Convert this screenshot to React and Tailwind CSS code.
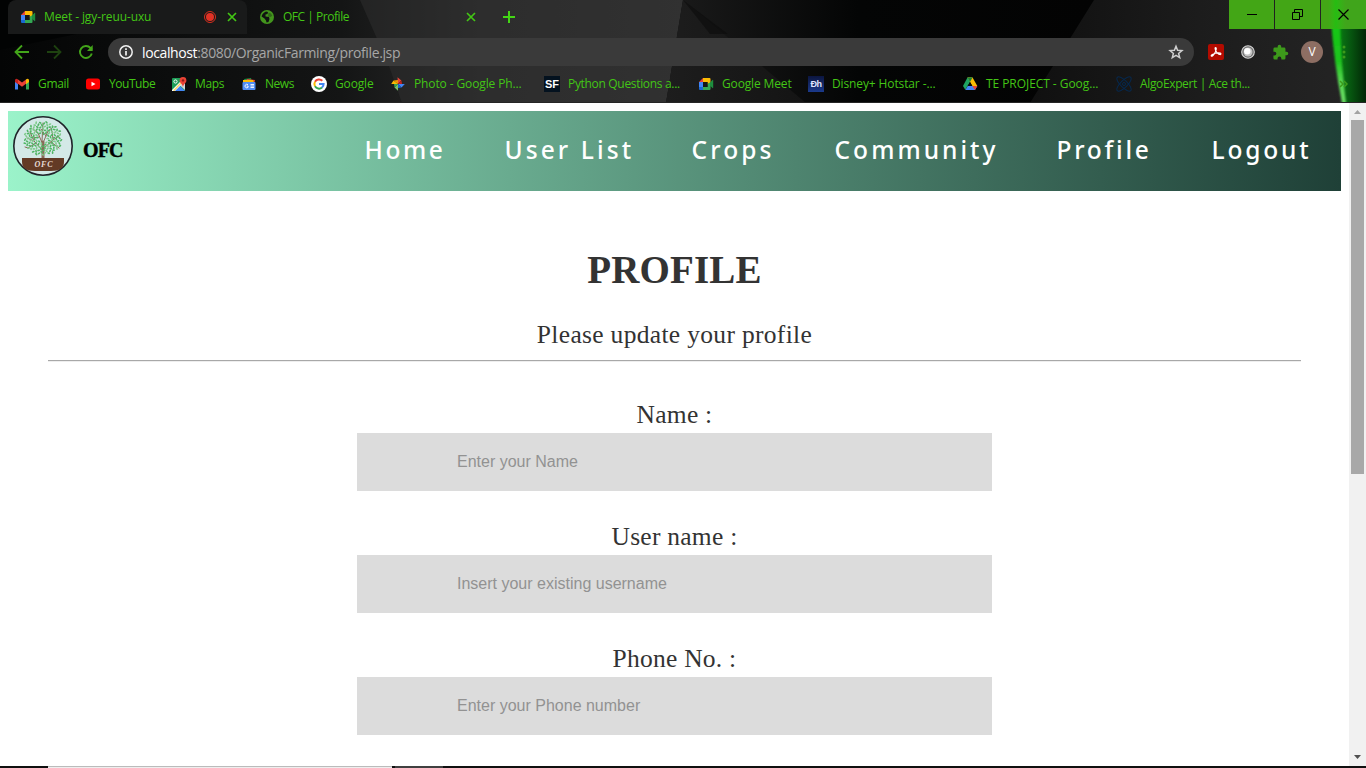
import React from "react";

const MeetIcon = () => (
  <svg viewBox="0 0 16 16" className="size-4 shrink-0">
    <path d="M1 6 5 2v4z" fill="#ea4335" />
    <path d="M5 2h6.500a1 1 0 0 1 1 1v3.500l-3 2V6H5z" fill="#fbbc04" />
    <path d="M1 6h4v5H1z" fill="#4285f4" />
    <path d="M1 11h4v3H2a1 1 0 0 1-1-1z" fill="#1967d2" />
    <path d="M5 11h4.500V8l3-2v7a1 1 0 0 1-1 1H5z" fill="#34a853" />
    <path d="M12 6.500 14.500 4q.7-.4.7.4v7.200q0 .8-.7.4L12 9.700z" fill="#1e8e3e" />
    <path d="M5 6h4.500v5H5z" fill="#151616" />
  </svg>
);

const icons = {
  gmail: (
    <svg viewBox="0 0 16 16" className="size-4 shrink-0">
      <path d="M1 4v9.500h3V6z" fill="#4285f4" />
      <path d="M12 6v7.500h3V4z" fill="#34a853" />
      <path d="M4 3.500v4.200l4 3 4-3V3.500l-4 3z" fill="#ea4335" />
      <path d="M1 4.500V6l3 2.200V3.500L3.200 3Q1 2.400 1 4.500z" fill="#c5221f" />
      <path d="M15 4.500V6l-3 2.200V3.500l.8-.5Q15 2.400 15 4.500z" fill="#fbbc04" />
    </svg>
  ),
  youtube: (
    <svg viewBox="0 0 16 16" className="size-4 shrink-0">
      <rect x="1" y="2.500" width="14" height="11" rx="2.500" fill="#f00" />
      <path d="m6.500 5.700 4 2.300-4 2.300z" fill="#fff" />
    </svg>
  ),
  maps: (
    <svg viewBox="0 0 16 16" className="size-4 shrink-0">
      <rect x="1" y="2" width="13" height="13" rx="1" fill="#1e9e58" />
      <path d="M14 7v7L8.500 9z" fill="#cfd8dc" />
      <path d="m2 15 6-6 6 6z" fill="#4285f4" />
      <path d="m1 14 9-9 2 2-8 8H1z" fill="#fff" />
      <path d="m2 14.500 8-8.500 1 1-7.500 8z" fill="#fdd663" />
      <circle cx="4.500" cy="5.500" r="1.600" fill="none" stroke="#fff" />
      <path d="M12 1a3.400 3.400 0 0 1 3.400 3.400C15.400 7 12.500 7.500 12 11c-.5-3.500-3.400-4-3.400-6.600A3.400 3.400 0 0 1 12 1z" fill="#ea4335" />
      <circle cx="12" cy="4.400" r="1.200" fill="#8c1d18" />
    </svg>
  ),
  news: (
    <svg viewBox="0 0 16 16" className="size-4 shrink-0">
      <path d="m3 3 7-1 1 4H4z" fill="#1e8e3e" />
      <path d="m6 3 8 1-1 4-8-1z" fill="#ea4335" />
      <path d="M2 4h10l1 3H2z" fill="#fbbc04" />
      <rect x="1.500" y="6" width="13" height="8" rx="1" fill="#4f8df5" />
      <path d="M7 8.700A1.800 1.800 0 1 0 7.100 11.300V10H5.600M9.500 8.500h3.500M9.500 10h3.500M9.500 11.500h3.500" fill="none" stroke="#fff" strokeWidth="0.900" />
    </svg>
  ),
  google: (
    <svg viewBox="0 0 16 16" className="size-4 shrink-0">
      <circle cx="8" cy="8" r="8" fill="#fff" />
      <g fill="none" strokeWidth="2">
        <path d="M4 5.700A4.600 4.600 0 0 1 11.300 4.800" stroke="#ea4335" />
        <path d="M4 10.300a4.600 4.600 0 0 1 0-4.600" stroke="#fbbc04" />
        <path d="M11 11.500a4.600 4.600 0 0 1-7-1.200" stroke="#34a853" />
        <path d="M8 8h4.600a4.600 4.600 0 0 1-1.600 3.500" stroke="#4285f4" />
      </g>
    </svg>
  ),
  photos: (
    <svg viewBox="0 0 16 16" className="size-4 shrink-0">
      <path d="M8 8 7.500 1.200 11.300 4.500z" fill="#ea4335" />
      <path d="M8 8 11.500 4.500 12 8z" fill="#c5221f" />
      <path d="M8 8 14.800 8 11.500 11.500z" fill="#4285f4" />
      <path d="M8 8 11.500 11.500 8 12z" fill="#1967d2" />
      <path d="M8 8v6.800L4.500 11.500z" fill="#7cc36a" />
      <path d="M8 8 4.500 11.500 4 8z" fill="#34a853" />
      <path d="M8 8H1.200L3.500 4.500z" fill="#fbbc04" />
      <path d="M8 8 3.500 4.500 8 4z" fill="#f29900" />
    </svg>
  ),
  sf: (
    <span className="flex size-4 shrink-0 items-center justify-center bg-[#04121f] font-['Liberation_Sans',sans-serif] text-[11px] font-bold leading-none text-white">SF</span>
  ),
  meet: <MeetIcon />,
  hotstar: (
    <span className="flex size-4 shrink-0 items-center justify-center bg-linear-to-b from-[#0c1640] to-[#1b3a8c] font-['Liberation_Sans',sans-serif] text-[9px] font-bold leading-none tracking-[-0.5px] text-[#dfe4ff]">Ðh</span>
  ),
  drive: (
    <svg viewBox="0 0 16 16" className="size-4 shrink-0">
      <path d="M5.500 1.500h5L8 6l-4.700 7.800L1 10z" fill="#1ea362" />
      <path d="M5.500 1.500h5L15.300 10h-5z" fill="#fbbc04" />
      <path d="M5.500 1.500h5L8 6z" fill="#188038" />
      <path d="M3.300 14 5.700 10h9.600L13 14z" fill="#4285f4" />
      <path d="M10.300 10h5L13 14z" fill="#ea4335" />
      <path d="M8 6 5.700 10h4.600z" fill="#0a0a0a" />
    </svg>
  ),
  algo: (
    <svg viewBox="0 0 16 16" className="size-4 shrink-0" fill="none" stroke="#06284d" strokeWidth="1">
      <ellipse cx="8" cy="8" rx="9.500" ry="3.500" transform="rotate(45 8 8)" />
      <ellipse cx="8" cy="8" rx="9.500" ry="3.500" transform="rotate(-45 8 8)" />
      <circle cx="8" cy="8" r="1.500" />
    </svg>
  ),
};

const bookmarks = [
  ["gmail", "Gmail", "w-[71px]", "tracking-[-0.3px]"],
  ["youtube", "YouTube", "w-[86px]", "tracking-[-0.45px]"],
  ["maps", "Maps", "w-[70px]", "tracking-[-0.35px]"],
  ["news", "News", "w-[70px]", "tracking-[-0.45px]"],
  ["google", "Google", "w-[79px]", "tracking-[-0.15px]"],
  ["photos", "Photo - Google Ph...", "w-[154px]", "tracking-[-0.12px]"],
  ["sf", "Python Questions a...", "w-[154px]", "tracking-[-0.32px]"],
  ["meet", "Google Meet", "w-[110px]", "tracking-[-0.14px]"],
  ["hotstar", "Disney+ Hotstar -...", "w-[154px]", "tracking-[-0.12px]"],
  ["drive", "TE PROJECT - Goog...", "w-[154px]", "tracking-[-0.06px]"],
  ["algo", "AlgoExpert | Ace th...", "w-[222px]", "tracking-[-0.36px]"],
];

function ThemeBackdrop() {
  return (
    <svg className="absolute inset-0" width="1366" height="103" viewBox="0 0 1366 103">
      <defs>
        <linearGradient id="left" x1="0" x2="1">
          <stop offset="0" stopColor="#040505" />
          <stop offset="0.500" stopColor="#141515" />
          <stop offset="0.700" stopColor="#2a2a2a" />
          <stop offset="1" stopColor="#323232" />
        </linearGradient>
        <linearGradient id="mid" x1="0" x2="1">
          <stop offset="0" stopColor="#1b1b1b" />
          <stop offset="0.450" stopColor="#040505" />
          <stop offset="1" stopColor="#030303" />
        </linearGradient>
        <linearGradient id="facet" x1="0" x2="1">
          <stop offset="0" stopColor="#1d1d1d" />
          <stop offset="1" stopColor="#141414" />
        </linearGradient>
        <linearGradient id="right" x1="0" x2="1">
          <stop offset="0" stopColor="#101010" />
          <stop offset="0.500" stopColor="#1c1c1c" />
          <stop offset="1" stopColor="#252525" />
        </linearGradient>
        <linearGradient id="edge" x1="0" x2="1">
          <stop offset="0" stopColor="#0a8a14" />
          <stop offset="0.500" stopColor="#075810" />
          <stop offset="1" stopColor="#022606" />
        </linearGradient>
        <linearGradient id="ray" x1="0" x2="0" y1="0" y2="1">
          <stop offset="0" stopColor="#11c711" />
          <stop offset="0.500" stopColor="#1fc41f" />
          <stop offset="0.750" stopColor="#5ad854" />
          <stop offset="1" stopColor="#6ade64" />
        </linearGradient>
        <filter id="soft" x="-50%" width="200%">
          <feGaussianBlur stdDeviation="0.800 0" />
        </filter>
      </defs>
      <rect width="1366" height="103" fill="#020303" />
      <path d="M0 50 240 0H683l-17 103H0z" fill="url(#left)" />
      <path d="M360 0h323l-17 103H402L389 66z" fill="#303030" opacity=".5" />
      <path d="M683 0h410l-53 103H666z" fill="url(#mid)" />
      <path d="M683 0 806 103H666z" fill="url(#facet)" />
      <path d="m683 0 45 34h-18z" fill="#0c0c0c" opacity=".6" />
      <path d="M1094 0h272v103H1030z" fill="url(#right)" />
      <path d="M1334 29h32v74h-22z" fill="url(#edge)" />
      <path d="M1331 20h9q1 45 6 83h-4q-8-40-11-83z" fill="url(#ray)" filter="url(#soft)" />
    </svg>
  );
}

function Browser() {
  return (
    <header className="relative h-[103px] shrink-0 overflow-hidden border-b border-[#252525] bg-black font-['Open_Sans','Noto_Sans',sans-serif] text-[12px] text-[#43c615]">
      <ThemeBackdrop />
      <div className="relative flex h-[102px] flex-col">
        <div className="flex h-[34px]">
          <div className="ml-2 flex w-[239px] items-center rounded-t-lg bg-[#191a1a] pl-3">
            <MeetIcon />
            <span className="ml-2 w-[160px] whitespace-nowrap tracking-[-0.1px]">Meet - jgy-reuu-uxu</span>
            <svg viewBox="0 0 12 12" className="size-3">
              <circle cx="6" cy="6" r="5.500" fill="none" stroke="#d9301f" />
              <circle cx="6" cy="6" r="4" fill="#e33225" />
            </svg>
            <svg viewBox="0 0 10 10" className="ml-[11px] size-[10px]" stroke="#43c615" strokeWidth="1.700">
              <path d="m1 1 8 8M9 1 1 9" />
            </svg>
          </div>
          <div className="flex w-[230px] items-center pl-[13px]">
            <svg viewBox="0 0 14 14" className="size-[14px]">
              <circle cx="7" cy="7" r="7" fill="#43951d" />
              <path d="M6 1.600 8 2 7.500 4 5.500 4.500 5.500 6.500 9 7l.5 2L8.500 12 6.500 12.500 6 10.500 4.500 8.500 1.600 6.500Q2 3.500 6 1.600z" fill="#101211" />
              <path d="m8.500 2.500 2.500 1 1.200 2.200-1.700 1.300-2.500-.5z" fill="#101211" opacity=".35" />
            </svg>
            <span className="ml-[9px] w-[183px] tracking-[-0.47px]">OFC | Profile</span>
            <svg viewBox="0 0 10 10" className="size-[10px] shrink-0" stroke="#43c615" strokeWidth="1.700">
              <path d="m1 1 8 8M9 1 1 9" />
            </svg>
          </div>
          <div className="flex flex-1 items-center pl-[26px]">
            <svg viewBox="0 0 12 12" className="size-3" stroke="#43d615" strokeWidth="2">
              <path d="M6 0v12M0 6h12" />
            </svg>
          </div>
          <div className="flex h-[29px] gap-px">
            <span className="flex w-[45px] items-center justify-center bg-[#43a616]">
              <svg width="10" height="10" stroke="#000"><path d="M0 4.500h10" /></svg>
            </span>
            <span className="flex w-[45px] items-center justify-center bg-[#43a616]">
              <svg width="11" height="11" fill="none" stroke="#000"><path d="M.5 3.500h7v7h-7zM2.500 3V.5h8v7H8" /></svg>
            </span>
            <span className="flex w-[45px] items-center justify-center bg-linear-to-r from-[#43a616] from-15% via-[#25bd12] via-33% to-[#40a51b] to-55%">
              <svg width="11" height="11" stroke="#000" strokeWidth="1.200"><path d="m.5.5 10 10m0-10-10 10" /></svg>
            </span>
          </div>
        </div>

        <div className="flex h-9 items-center pl-[14px]">
          <svg viewBox="0 0 16 16" className="size-4" fill="none" stroke="#43a51a" strokeWidth="1.800">
            <path d="M15 8H2M8 1.500 1.500 8 8 14.500" />
          </svg>
          <svg viewBox="0 0 16 16" className="ml-4 size-4" fill="none" stroke="#1e4210" strokeWidth="1.800">
            <path d="M1 8h13M8 1.500 14.500 8 8 14.500" />
          </svg>
          <svg viewBox="0 0 16 16" className="ml-4 size-4" fill="none" stroke="#43a51a" strokeWidth="1.900">
            <path d="M13.800 9.500A6 6 0 1 1 12.500 4l1.500 1.700" />
            <path d="M14.700 1v6H9z" fill="#43a51a" stroke="none" />
          </svg>
          <div className="ml-[14px] flex h-7 w-[1086px] items-center rounded-full bg-[#3a3a3a] pl-[11px] pr-[10px]">
            <svg viewBox="0 0 14 14" className="size-[14px]" fill="none" stroke="#f1f1f1" strokeWidth="1.500">
              <circle cx="7" cy="7" r="6.200" />
              <path d="M7 6v4.500M7 3.300v1.600" strokeWidth="1.700" />
            </svg>
            <span className="ml-[9px] flex-1 text-[14px] tracking-[-0.38px] text-[#a7a7a7]">
              <span className="text-white">localhost</span>:8080/OrganicFarming/profile.jsp
            </span>
            <svg viewBox="0 0 16 16" className="size-4" fill="none" stroke="#cfcfcf" strokeWidth="1.500">
              <path d="m8 2.300 1.600 4 4.300.3-3.300 2.800 1.100 4.200L8 11.300l-3.700 2.300 1.100-4.200-3.300-2.800 4.300-.3z" />
            </svg>
          </div>
          <svg viewBox="0 0 16 16" className="ml-[14px] size-4">
            <rect width="16" height="16" rx="2" fill="#b30b00" />
            <path d="M7.500 3.500c1.500 0 .5 3.500-.7 5.500C5.800 10.800 4 12.800 3.300 12c-.8-1 3-2.800 6-3 2.500-.2 4 .3 3.500 1.200-.7 1.200-3.800-1-4.800-3-.9-1.800-1.200-3.700-.5-3.700z" fill="none" stroke="#fff" strokeWidth="1.200" />
          </svg>
          <svg viewBox="0 0 16 16" className="ml-4 size-4">
            <circle cx="8" cy="8" r="6.300" fill="#6d6d6d" stroke="#d5d5d5" strokeWidth="1.100" />
            <circle cx="8" cy="8" r="4.500" fill="#c4c4c4" />
            <circle cx="7.300" cy="7.300" r="3.200" fill="#fff" />
          </svg>
          <svg viewBox="0 0 24 24" className="ml-4 size-[17px]" fill="#3d9a1b">
            <path d="M20.500 11H19V7a2 2 0 0 0-2-2h-4V3.500a2.500 2.500 0 0 0-5 0V5H4a2 2 0 0 0-2 2v3.800h1.500a2.700 2.700 0 0 1 0 5.400H2V20a2 2 0 0 0 2 2h3.800v-1.500a2.700 2.700 0 0 1 5.400 0V22H17a2 2 0 0 0 2-2v-4h1.500a2.500 2.500 0 0 0 0-5z" />
          </svg>
          <span className="ml-[12px] flex size-[22px] items-center justify-center rounded-full bg-[#8d6e63] text-[12px] font-medium leading-none text-white">V</span>
          <svg width="4" height="14" className="ml-[19px]" fill="#3d9a1b">
            <circle cx="2" cy="2" r="1.500" /><circle cx="2" cy="7" r="1.500" /><circle cx="2" cy="12" r="1.500" />
          </svg>
        </div>

        <div className="flex h-7 items-center pl-[14px]">
          {bookmarks.map(([icon, label, width, tracking]) => (
            <div key={icon} className={`flex shrink-0 items-center gap-2 whitespace-nowrap ${width}`}>
              {icons[icon]}
              <span className={tracking}>{label}</span>
            </div>
          ))}
          <svg width="10" height="8" className="ml-[1px]" fill="none" stroke="#3d9a1b" strokeWidth="1.500">
            <path d="m1 1 3 3-3 3M5 1l3 3-3 3" />
          </svg>
        </div>
      </div>
    </header>
  );
}

const leaves = Array.from({ length: 120 }, (_, i) => {
  const a = i * 2.4;
  const r = Math.sqrt((i + 8) / 128);
  return [30 + Math.cos(a) * r * 19, 22.500 + Math.sin(a) * r * 17, (i * 47) % 180];
});

function Logo() {
  return (
    <svg viewBox="0 0 60 60" className="size-[60px]">
      <circle cx="30" cy="30" r="29.200" fill="#d3e9e7" stroke="#20242a" strokeWidth="1.600" />
      <g fill="none" stroke="#8b6a58" strokeLinecap="round">
        <path d="M30 43V26" strokeWidth="3" />
        <path d="M30 35 21 25l-7-3M30 33l10-9 6-4M30 29l-5-12-5-4M30 27l5-12 5-4M29 25l1-18M23 27l-8 5-3-1M38 26l8 6M21 25l-4-9M40 23l-1-8M33 20l-5-7M26 21l-6 1" strokeWidth="1" />
      </g>
      {leaves.map(([x, y, angle], i) => (
        <ellipse key={i} cx={x} cy={y} rx="1.500" ry="0.850" fill={i % 3 ? "#4fb563" : "#7fcb8c"} transform={`rotate(${angle} ${x} ${y})`} />
      ))}
      <path d="M9 42h42v4q0 9-13 9H22Q9 55 9 46z" fill="#633a25" />
      <text x="30.500" y="51" textAnchor="middle" textLength="18" fontFamily="Liberation Serif, serif" fontStyle="italic" fontWeight="bold" fontSize="8" fill="#e8dcd6">OFC</text>
    </svg>
  );
}

const links = [
  ["Home", "w-[140px]", "tracking-[2.600px]"],
  ["User List", "w-[187px]", "tracking-[3.100px]"],
  ["Crops", "w-[143px]", "tracking-[3.100px]"],
  ["Community", "w-[222px]", "tracking-[3.050px]"],
  ["Profile", "w-[155px]", "tracking-[2.750px]"],
  ["Logout", "w-[129px]", "tracking-[2.850px]"],
];

const fields = [
  ["Name :", "Enter your Name"],
  ["User name :", "Insert your existing username"],
  ["Phone No. :", "Enter your Phone number"],
];

export default function App() {
  return (
    <div className="flex h-[768px] w-[1366px] flex-col overflow-hidden bg-white">
      <Browser />
      <div className="flex h-[663px] shrink-0">
        <main className="w-[1349px] overflow-hidden px-2 pt-2 text-[#333]">
          <nav className="flex h-20 w-[1333px] bg-linear-to-r from-[#9bf3ca] to-[#1f4037]">
            <div className="flex w-[356.500px] shrink-0 pl-[5px] pt-[5px]">
              <Logo />
              <span className="ml-[10px] mt-[21px] font-['Liberation_Serif',serif] text-[20px] font-bold leading-[26px] tracking-[-0.900px] text-black [-webkit-text-stroke:0.4px_black]">OFC</span>
            </div>
            {links.map(([label, width, tracking]) => (
              <a key={label} className={`shrink-0 whitespace-nowrap pt-[22px] font-['Noto_Sans',sans-serif] text-[24.500px] font-medium leading-[34px] text-white ${width} ${tracking}`}>{label}</a>
            ))}
          </nav>
          <section className="flex flex-col items-center px-10 pt-[55px] font-['Liberation_Serif',serif]">
            <h1 className="text-[39px] font-bold leading-[48px] tracking-[0.150px]">PROFILE</h1>
            <p className="mt-[26px] text-[25.500px] leading-[30px] tracking-[0.320px]">Please update your profile</p>
            <hr className="mt-[10px] h-[2px] w-full border-t border-b border-t-[#a8a8a8] border-b-[#eee]" />
            <form className="mt-[38px] flex w-[635px] flex-col gap-[31px]">
              {fields.map(([label, hint]) => (
                <label key={label} className="flex flex-col text-center text-[25.500px] leading-[30px] tracking-[0.250px]">
                  <span className="h-[33px]">{label}</span>
                  <input
                    className="h-[58px] w-full bg-[#dcdcdc] pl-[100px] font-['Liberation_Sans',sans-serif] text-[16px] tracking-normal outline-none placeholder:text-[#929292]"
                    placeholder={hint}
                  />
                </label>
              ))}
            </form>
          </section>
        </main>
        <aside className="flex w-[17px] flex-col items-center bg-[#f1f1f1]">
          <svg width="17" height="17"><path d="M5 11h7L8.500 7z" fill="#a3a3a3" /></svg>
          <div className="h-[354px] w-[13px] bg-[#a8a8a8]" />
          <svg width="17" height="17" className="mt-auto"><path d="M5 6h7l-3.500 4z" fill="#505050" /></svg>
        </aside>
      </div>
      <footer className="flex h-[2px] shrink-0 bg-[#101010]">
        <div className="ml-12 h-[2px] w-[344px] border-t border-[#bbb] bg-[#eee]" />
        <div className="ml-[3px] w-12 bg-[#404040]" />
      </footer>
    </div>
  );
}
